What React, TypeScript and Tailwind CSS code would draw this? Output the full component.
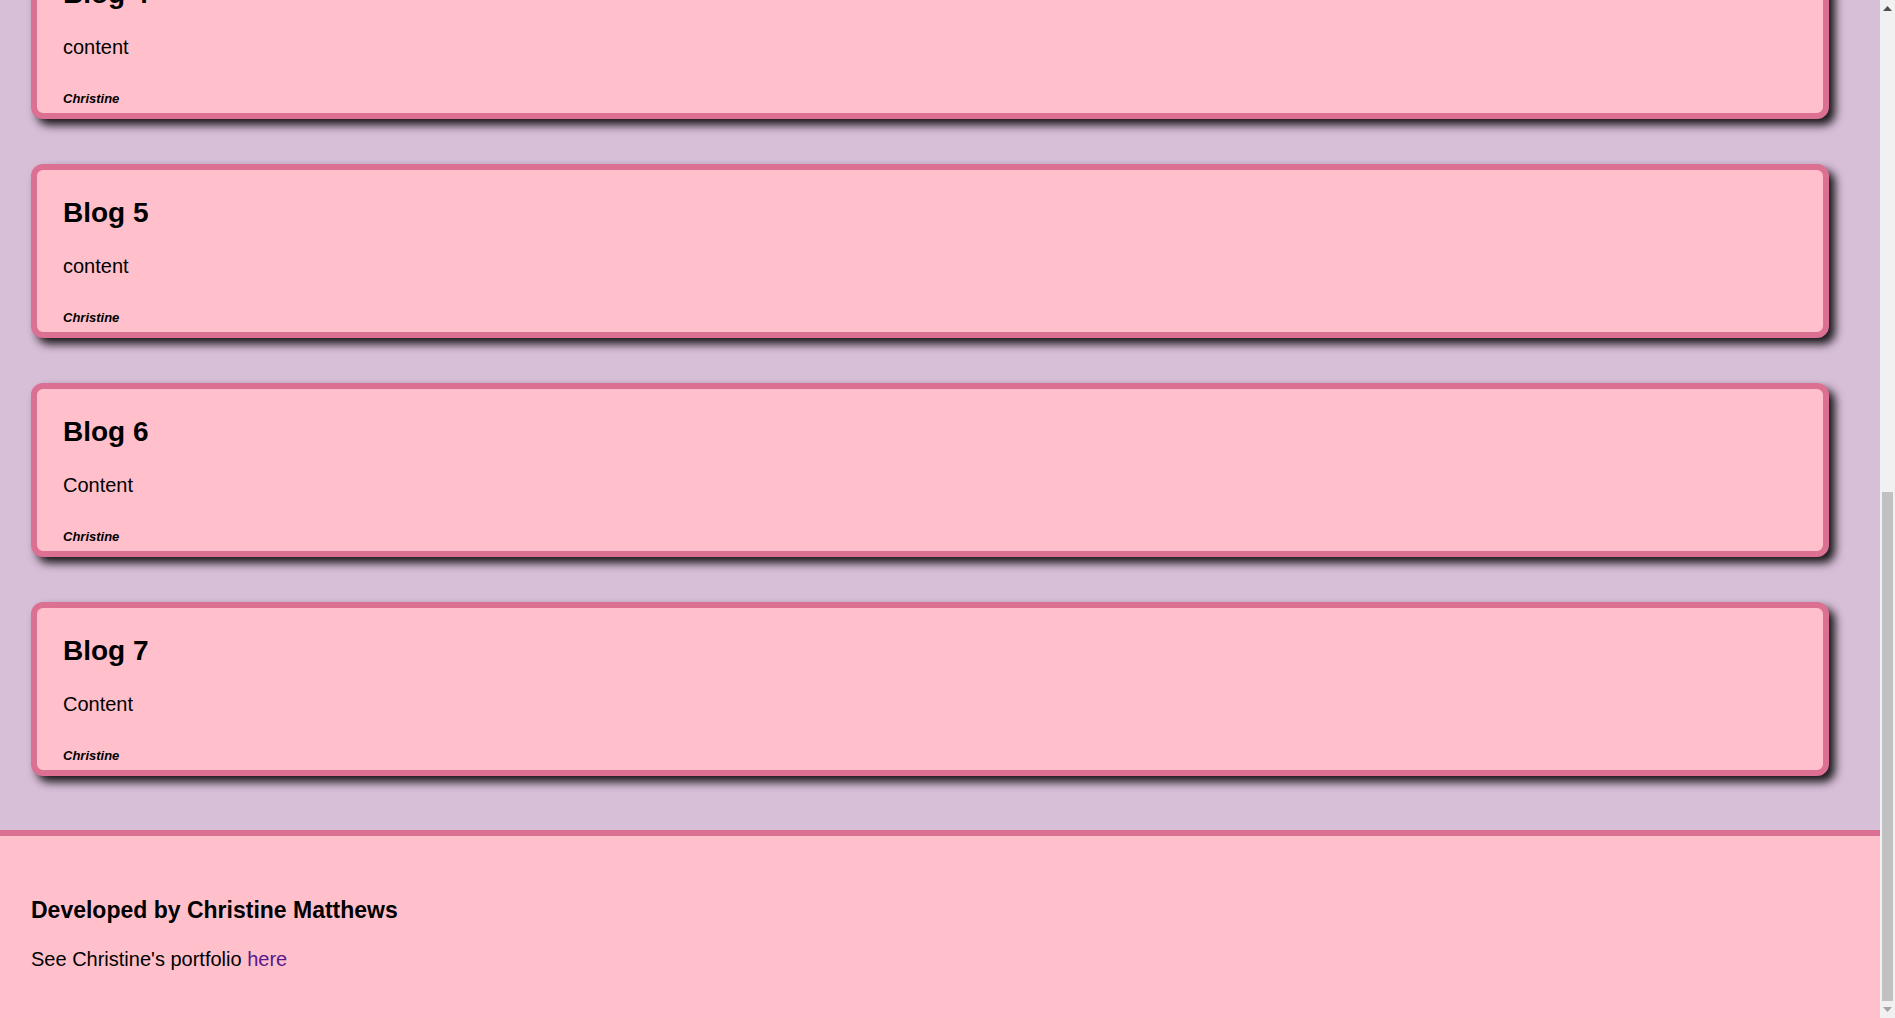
import { useLayoutEffect, useRef } from 'react';

const blogs = [
  { title: 'Blog 1', content: 'content' },
  { title: 'Blog 2', content: 'content' },
  { title: 'Blog 3', content: 'content' },
  { title: 'Blog 4', content: 'content' },
  { title: 'Blog 5', content: 'content' },
  { title: 'Blog 6', content: 'Content' },
  { title: 'Blog 7', content: 'Content' },
];

export default function App() {
  const pageRef = useRef<HTMLDivElement>(null);

  // the page is shown scrolled all the way down
  useLayoutEffect(() => {
    if (pageRef.current) pageRef.current.scrollTop = pageRef.current.scrollHeight;
  }, []);

  return (
    <div className="flex h-screen font-['Liberation_Sans',Arial,sans-serif] text-black">
      <div ref={pageRef} className="flex-1 h-screen overflow-hidden bg-[#d8bfd8]">
        <header className="h-[205px] mb-[45px] flex items-center pl-[31px] bg-[#ffc0cb] border-b-[6px] border-[#db7093]">
          <h1 className="text-[40px] font-bold">Christine's Blog</h1>
        </header>

        <main className="flex flex-col gap-[45px] ml-[31px] mr-[51px] mb-[54px]">
          {blogs.map((blog) => (
            <BlogCard key={blog.title} title={blog.title} content={blog.content} />
          ))}
        </main>

        <footer className="bg-[#ffc0cb] border-t-[6px] border-[#db7093] pl-[31px] pt-[60px] pb-[47px]">
          <h3 className="text-[23px] leading-[28px] font-bold">
            Developed by Christine Matthews
          </h3>
          <p className="mt-[23px] text-[20px] leading-[24px]">
            See Christine's portfolio{' '}
            <a href="#" className="text-[#551a8b]">
              here
            </a>
          </p>
        </footer>
      </div>

      <ScrollBar />
    </div>
  );
}

function BlogCard({ title, content }: { title: string; content: string }) {
  return (
    <article className="bg-[#ffc0cb] border-[6px] border-[#db7093] rounded-[12px] shadow-[6px_6px_10px_rgba(0,0,0,0.9)] pl-[26px] pt-[27px] pb-[6px]">
      <h2 className="text-[28px] leading-[32px] font-bold">{title}</h2>
      <p className="mt-[25px] text-[20px] leading-[24px]">{content}</p>
      <p className="mt-[32px] text-[13px] leading-[16px] font-bold italic">Christine</p>
    </article>
  );
}

function ScrollBar() {
  return (
    <div className="w-[15px] h-screen bg-[#f1f1f1] flex flex-col items-center">
      <div className="h-[17px] flex items-center justify-center">
        <svg width="9" height="5" viewBox="0 0 9 5">
          <path d="M0 5 L4.5 0 L9 5 Z" fill="#505050" />
        </svg>
      </div>
      <div className="flex-1 w-full flex flex-col justify-end px-[2px]">
        <div className="h-[509px] w-full bg-[#c1c1c1]" />
      </div>
      <div className="h-[17px] flex items-center justify-center">
        <svg width="9" height="5" viewBox="0 0 9 5">
          <path d="M0 0 L9 0 L4.5 5 Z" fill="#a3a3a3" />
        </svg>
      </div>
    </div>
  );
}
